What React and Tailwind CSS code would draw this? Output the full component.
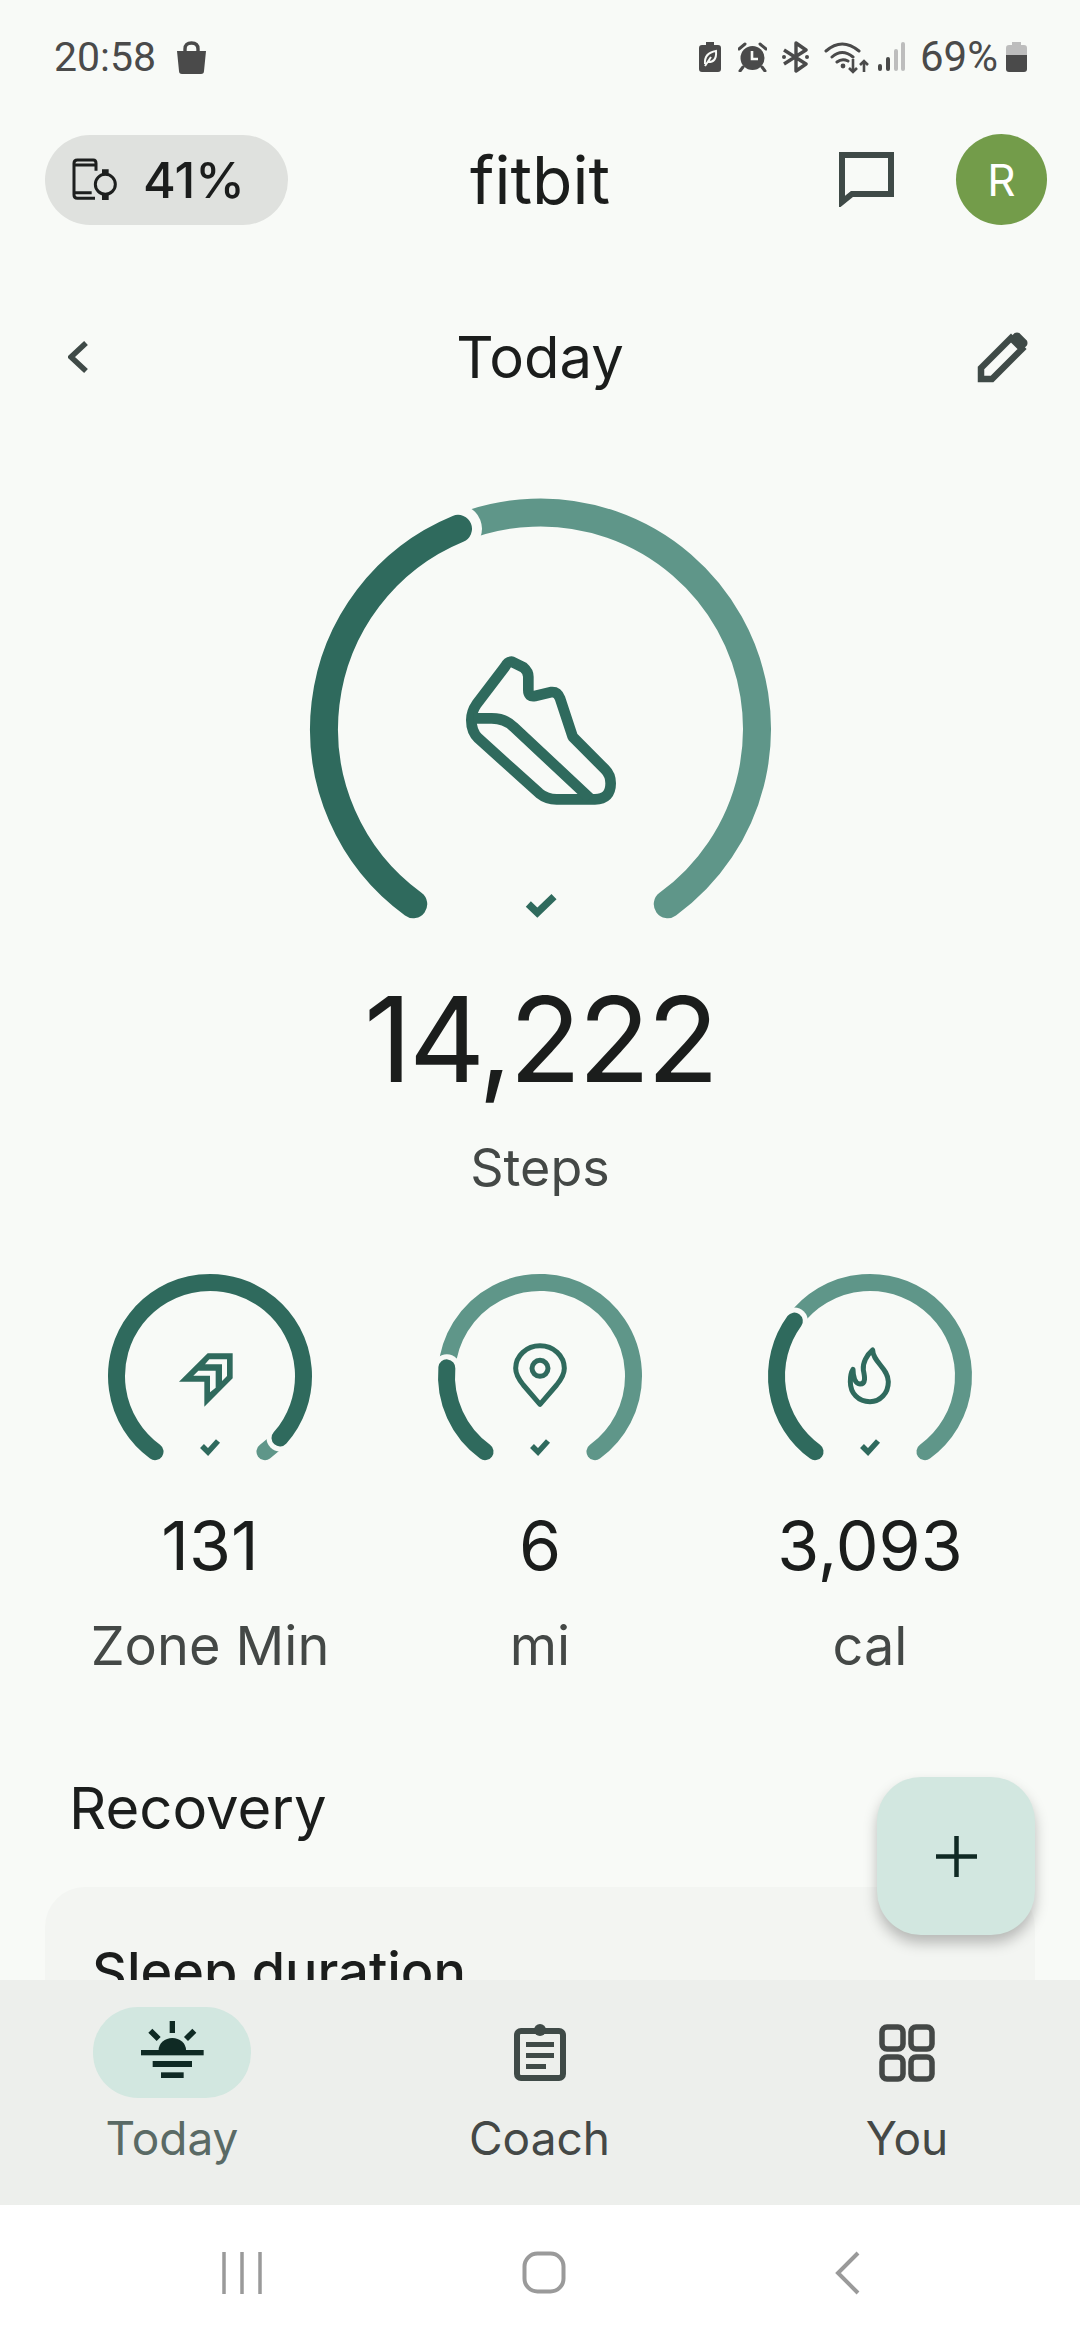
import React from 'react';

const DARK = '#2f6a5d';
const LIGHT = '#5f9689';
const BG = '#f8faf7';

const polar = (cx, cy, r, deg) => {
  const a = (deg * Math.PI) / 180;
  return [cx + r * Math.sin(a), cy - r * Math.cos(a)];
};

const arc = (cx, cy, r, from, to) => {
  const [x1, y1] = polar(cx, cy, r, from);
  const [x2, y2] = polar(cx, cy, r, to);
  const large = to - from > 180 ? 1 : 0;
  return `M${x1} ${y1} A${r} ${r} 0 ${large} 1 ${x2} ${y2}`;
};

const Arcs = ({ cx, cy, r, width, gap, end }) => {
  const [hx, hy] = polar(cx, cy, r, end);
  return (
    <>
      <path d={arc(cx, cy, r, end, 504)} fill="none" stroke={LIGHT} strokeWidth={width} strokeLinecap="round" />
      <circle cx={hx} cy={hy} r={width / 2 + gap} fill={BG} />
      <path d={arc(cx, cy, r, 216, end)} fill="none" stroke={DARK} strokeWidth={width} strokeLinecap="round" />
    </>
  );
};

const ZoneIcon = () => (
  <>
    <path d="M128 55H203V130L118 215V140H42Z" fill={DARK} />
    <path d="M133 73H186V123L171 138V88H120Z" fill={BG} />
    <path d="M100 107H152V158L135 172V122H85Z" fill={BG} />
  </>
);

const PinIcon = () => (
  <g fill="none" stroke={DARK} strokeWidth="15">
    <path d="M135 208L85 150Q62 122 62 100A73 68 0 0 1 208 100Q208 122 185 150Z" strokeLinejoin="round" />
    <circle cx="135" cy="100" r="24" />
  </g>
);

const FlameIcon = () => (
  <path
    d="M143 45C143 80 190 100 190 140C190 175 165 200 135 200C100 200 76 175 76 140C76 125 78 112 84 103C84 125 90 147 105 147C125 147 118 120 115 105C112 85 125 60 143 45Z"
    fill="none"
    stroke={DARK}
    strokeWidth="15"
    strokeLinejoin="round"
  />
);

const SmallStat = ({ end, icon, value, label }) => (
  <div className="flex flex-col items-center">
    <svg width="240" height="200" viewBox="0 0 240 200">
      <Arcs cx={120} cy={111} r={93.5} width={17} gap={5} end={end} />
      <svg x="75" y="70" width="90" height="90" viewBox="0 0 270 270">
        {icon}
      </svg>
      <path d="M112 181L118 187L128 176" fill="none" stroke={DARK} strokeWidth="5.5" />
    </svg>
    <div className="mt-[44px] h-[72px] text-[68px] leading-[72px] text-[#1b1d1c]">{value}</div>
    <div className="mt-[35px] h-[60px] text-[54px] leading-[60px] text-[#444846]">{label}</div>
  </div>
);

const StatusIcons = () => (
  <div className="flex items-center">
    <svg width="22" height="30" viewBox="0 0 22 30">
      <path d="M7 0H15V3H19Q22 3 22 6V27Q22 30 19 30H3Q0 30 0 27V6Q0 3 3 3H7Z" fill="#4a4a4a" />
      <path d="M6 22Q5 11 17 9Q18 21 8 20M6 24L12 15" fill="none" stroke="#f8faf7" strokeWidth="2" />
    </svg>
    <svg className="ml-[17px]" width="29" height="30" viewBox="0 0 29 30">
      <circle cx="14.5" cy="16" r="12" fill="#4a4a4a" />
      <path d="M14 9V17H20" fill="none" stroke="#f8faf7" strokeWidth="2.6" />
      <path d="M1 7L7 2M28 7L22 2M5 25L2 29M24 25L27 29" stroke="#4a4a4a" strokeWidth="3" strokeLinecap="round" />
    </svg>
    <svg className="ml-[15px]" width="27" height="32" viewBox="0 0 27 32">
      <path d="M2 9L24 23L14 30V2L24 9L2 23" fill="none" stroke="#4a4a4a" strokeWidth="3.4" strokeLinejoin="round" />
      <circle cx="2" cy="16" r="2" fill="#4a4a4a" />
      <circle cx="25" cy="16" r="2" fill="#4a4a4a" />
    </svg>
    <svg className="ml-[15px]" width="45" height="33" viewBox="0 0 45 33">
      <path d="M2 10Q18 -4 35 10M8 16Q18 7 29 16M13 21Q18 17 24 20" fill="none" stroke="#4a4a4a" strokeWidth="3" strokeLinecap="round" />
      <circle cx="19" cy="25" r="2.4" fill="#4a4a4a" />
      <path d="M29 18V31M25 27L29 31L33 27M40 31V20M36 24L40 20L44 24" fill="none" stroke="#4a4a4a" strokeWidth="2.6" />
    </svg>
    <svg className="ml-[9px]" width="27" height="30" viewBox="0 0 27 30">
      <rect x="0" y="22" width="4" height="7" rx="2" fill="#4a4a4a" />
      <rect x="8" y="15" width="4" height="14" rx="2" fill="#4a4a4a" />
      <rect x="16" y="7" width="4" height="22" rx="2" fill="#bdbdbd" />
      <rect x="23" y="0" width="4" height="29" rx="2" fill="#bdbdbd" />
    </svg>
    <span className="ml-[15px] text-[42px] leading-[44px] text-[#4a4a4a]">69%</span>
    <svg className="ml-[8px]" width="21" height="30" viewBox="0 0 21 30">
      <path d="M6 0H15V3H18Q21 3 21 6V13H0V6Q0 3 3 3H6Z" fill="#bdbdbd" />
      <path d="M0 13H21V27Q21 30 18 30H3Q0 30 0 27Z" fill="#4a4a4a" />
    </svg>
  </div>
);

export default function App() {
  return (
    <div className={`relative flex h-[2340px] w-[1080px] flex-col overflow-hidden bg-[#f8faf7] font-['Inter',sans-serif]`}>
      {/* status bar */}
      <div className="flex h-[114px] shrink-0 items-center justify-between pl-[54px] pr-[53px] font-['Roboto',sans-serif]">
        <div className="flex items-center">
          <span className="text-[41px] leading-[44px] text-[#4a4a4a]">20:58</span>
          <svg className="ml-[19px]" width="33" height="33" viewBox="0 0 33 33">
            <path d="M2 10H31L29 30Q29 33 26 33H7Q4 33 4 30Z" fill="#4a4a4a" />
            <path d="M10 13V8Q10 2 16.5 2Q23 2 23 8V13" fill="none" stroke="#4a4a4a" strokeWidth="3.4" />
          </svg>
        </div>
        <StatusIcons />
      </div>

      <div className="relative flex-1 overflow-hidden">
        {/* app header */}
        <div className="mt-5 grid h-[90px] grid-cols-[1fr_auto_1fr] items-center px-[45px]">
          <div className="flex h-[90px] w-[243px] items-center rounded-full bg-[#dfe1de] pl-[15px]">
            <svg width="60" height="60" viewBox="0 0 180 180">
              <path d="M105 145H52Q42 145 42 135V40Q42 30 52 30H100Q108 30 108 40V62M42 45H108M42 128H95" fill="none" stroke="#1d1f1e" strokeWidth="9" />
              <circle cx="136" cy="103" r="30" fill="none" stroke="#1d1f1e" strokeWidth="9" />
              <path d="M126 58H146V76H126ZM126 130H146V150H126Z" fill="#1d1f1e" />
            </svg>
            <span className="ml-[23px] text-[50px] font-medium leading-[60px] text-[#1b1d1c]">41%</span>
          </div>
          <div className="text-[66px] leading-[90px] text-[#1b1d1c]">fitbit</div>
          <div className="-mr-[12px] flex items-center justify-end">
            <svg width="55" height="55" viewBox="0 0 55 55">
              <path d="M3 3H52V42H13L3 50Z" fill="none" stroke="#3f4a47" strokeWidth="6" />
            </svg>
            <div className="ml-[62px] flex h-[91px] w-[91px] items-center justify-center rounded-full bg-[#739c4a] text-[44px] text-white">R</div>
          </div>
        </div>

        {/* page title */}
        <div className="mt-[88px] grid h-[90px] grid-cols-[1fr_auto_1fr] items-center px-[52px]">
          <svg className="ml-[16px]" width="20" height="32" viewBox="0 0 20 32">
            <path d="M18 2L3 16L18 30" fill="none" stroke="#3f4a47" strokeWidth="5.5" />
          </svg>
          <div className="text-[58px] leading-[90px] text-[#1b1d1c]">Today</div>
          <div className="flex justify-end">
            <svg width="51" height="51" viewBox="0 0 51 51">
              <path d="M4 47V36L34 6L45 17L15 47Z" fill="none" stroke="#3f4a47" strokeWidth="6.5" />
              <path d="M34 6L38 2Q40 1 42 2L49 9Q50 11 49 13L45 17Z" fill="#3f4a47" stroke="#3f4a47" strokeWidth="2" />
            </svg>
          </div>
        </div>

        {/* steps */}
        <div className="mt-[88px] flex flex-col items-center">
          <svg width="480" height="440" viewBox="0 0 480 440">
            <Arcs cx={240.5} cy={239} r={216.5} width={28} gap={10} end={337.6} />
            <g transform="translate(-20 -10) scale(0.33333)" fill="none" stroke={DARK} strokeWidth="32" strokeLinejoin="round">
              <path d="M695 545L730 562Q745 575 745 590V630Q745 652 765 648L815 636Q833 635 840 655L878 770L975 868Q992 885 992 910Q992 958 945 958H830Q800 958 778 940L595 775Q574 755 574 720Q574 695 590 672L675 560Q683 545 695 545Z" />
              <path d="M580 715H635Q675 715 700 740L930 955" />
              <path d="M745 1272L772 1298L822 1250" strokeWidth="22" strokeLinejoin="miter" />
            </g>
          </svg>
          <div className="mt-[34px] h-[150px] text-[118px] leading-[150px] tracking-[-3px] text-[#1b1d1c]">14,222</div>
          <div className="mt-[24px] h-[60px] text-[52px] leading-[60px] text-[#444846]">Steps</div>
        </div>

        {/* small stats */}
        <div className="mt-[67px] grid grid-cols-3 px-[45px]">
          <SmallStat end={491.5} icon={<ZoneIcon />} value="131" label="Zone Min" />
          <SmallStat end={275} icon={<PinIcon />} value="6" label="mi" />
          <SmallStat end={306} icon={<FlameIcon />} value="3,093" label="cal" />
        </div>

        {/* recovery */}
        <div className="mt-[94px] pl-[69px] text-[58px] leading-[76px] text-[#1b1d1c]">Recovery</div>
        <div className="mx-[45px] mt-[41px] h-[200px] rounded-[40px] bg-[#f3f5f2] px-[47px] pt-[55px]">
          <div className="text-[54px] font-medium leading-[60px] text-[#1b1d1c]">Sleep duration</div>
        </div>
      </div>

      {/* bottom nav */}
      <div className="flex h-[225px] shrink-0 justify-between bg-[#edefec] pl-[93px] pr-[94px] pt-[27px]">
        <div className="flex w-[158px] flex-col items-center">
          <div className="flex h-[91px] w-[158px] items-center justify-center rounded-[45px] bg-[#d2e7e0]">
            <svg width="100" height="90" viewBox="5 7 300 270" fill="#0f2a24">
              <rect x="148" y="46" width="16" height="36" />
              <path d="M90 75L115 100M222 75L197 100" stroke="#0f2a24" strokeWidth="17" />
              <path d="M115 133A41 36 0 0 1 197 133Z" />
              <rect x="62" y="133" width="188" height="16" />
              <rect x="97" y="166" width="118" height="18" />
              <rect x="122" y="200" width="68" height="17" />
            </svg>
          </div>
          <div className="mt-[14px] text-[46px] leading-[52px] text-[#5a6a65]">Today</div>
        </div>
        <div className="flex w-[158px] flex-col items-center">
          <div className="flex h-[91px] items-center justify-center">
            <svg width="52" height="57" viewBox="0 0 52 57" fill="#3f4a47">
              <rect x="3" y="7" width="46" height="47" rx="4" fill="none" stroke="#3f4a47" strokeWidth="6" />
              <circle cx="26" cy="6" r="6" />
              <rect x="12" y="18" width="28" height="5" />
              <rect x="12" y="29" width="28" height="5" />
              <rect x="12" y="40" width="20" height="5" />
            </svg>
          </div>
          <div className="mt-[14px] text-[46px] leading-[52px] text-[#444846]">Coach</div>
        </div>
        <div className="flex w-[158px] flex-col items-center">
          <div className="flex h-[91px] items-center justify-center">
            <svg width="56" height="58" viewBox="0 0 56 58" fill="none" stroke="#444846" strokeWidth="5.5">
              <rect x="3" y="3" width="21" height="22" rx="5" />
              <rect x="32" y="3" width="21" height="22" rx="5" />
              <rect x="3" y="33" width="21" height="22" rx="5" />
              <rect x="32" y="33" width="21" height="22" rx="5" />
            </svg>
          </div>
          <div className="mt-[14px] text-[46px] leading-[52px] text-[#444846]">You</div>
        </div>
      </div>

      {/* system nav */}
      <div className="flex h-[135px] shrink-0 items-center bg-white pl-[222px]">
        <svg width="40" height="42" viewBox="0 0 40 42" fill="none" stroke="#9a9a9a" strokeWidth="3.5">
          <path d="M2 0V42M20 0V42M38 0V42" />
        </svg>
        <svg className="ml-[260px]" width="44" height="43" viewBox="0 0 44 43">
          <rect x="2.5" y="2.5" width="39" height="38" rx="13" fill="none" stroke="#9a9a9a" strokeWidth="4" />
        </svg>
        <svg className="ml-[269px]" width="25" height="44" viewBox="0 0 25 44">
          <path d="M23 2L3 22L23 42" fill="none" stroke="#9a9a9a" strokeWidth="4" />
        </svg>
      </div>

      {/* add button */}
      <div className="absolute left-[877px] top-[1777px] flex h-[158px] w-[158px] items-center justify-center rounded-[44px] bg-[#d2e7e0] shadow-[0_8px_14px_rgba(0,0,0,0.25)]">
        <svg width="41" height="41" viewBox="0 0 41 41">
          <path d="M20.5 0V41M0 20.5H41" stroke="#0f2a24" strokeWidth="4.5" />
        </svg>
      </div>
    </div>
  );
}
